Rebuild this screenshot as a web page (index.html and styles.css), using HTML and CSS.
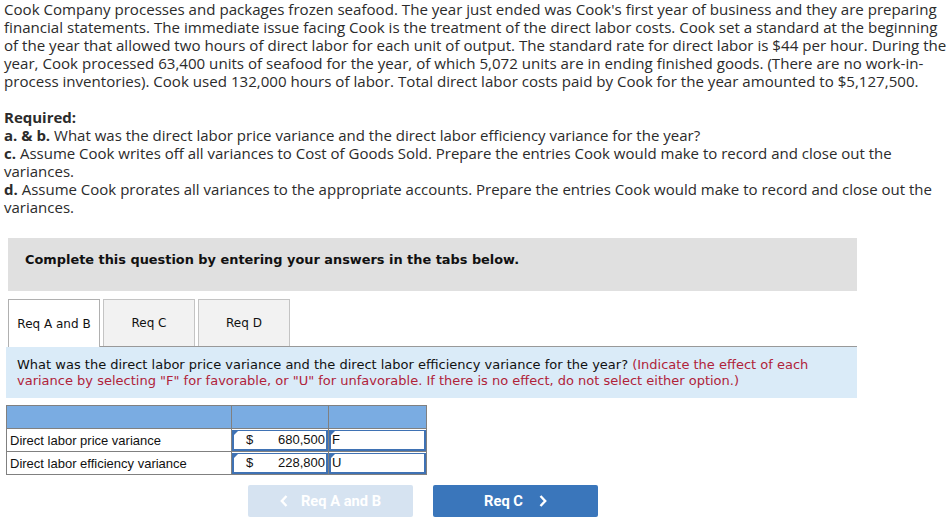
FILE: index.html
```html
<!DOCTYPE html>
<html>
<head>
<meta charset="utf-8">
<link rel="stylesheet" href="styles.css">
</head>
<body>
<div class="page">
  <p class="intro">Cook Company processes and packages frozen seafood. The year just ended was Cook's first year of business and they are preparing<br>financial statements. The immediate issue facing Cook is the treatment of the direct labor costs. Cook set a standard at the beginning<br>of the year that allowed two hours of direct labor for each unit of output. The standard rate for direct labor is $44 per hour. During the<br>year, Cook processed 63,400 units of seafood for the year, of which 5,072 units are in ending finished goods. (There are no work-in-<br>process inventories). Cook used 132,000 hours of labor. Total direct labor costs paid by Cook for the year amounted to $5,127,500.</p>

  <div class="required">
    <div class="req-title">Required:</div>
    <div><b>a. &amp; b.</b> What was the direct labor price variance and the direct labor efficiency variance for the year?</div>
    <div><b>c.</b> Assume Cook writes off all variances to Cost of Goods Sold. Prepare the entries Cook would make to record and close out the<br>variances.</div>
    <div><b>d.</b> Assume Cook prorates all variances to the appropriate accounts. Prepare the entries Cook would make to record and close out the<br>variances.</div>
  </div>

  <div class="complete">Complete this question by entering your answers in the tabs below.</div>

  <div class="tabs">
    <div class="tab active">Req A and B</div>
    <div class="tab">Req C</div>
    <div class="tab">Req D</div>
  </div>

  <div class="prompt">What was the direct labor price variance and the direct labor efficiency variance for the year? <span class="hint">(Indicate the effect of each variance by selecting "F" for favorable, or "U" for unfavorable. If there is no effect, do not select either option.)</span></div>

  <table class="grid">
    <tr class="head"><td class="c1"></td><td class="c2"></td><td class="c3"></td></tr>
    <tr>
      <td class="c1 label">Direct labor price variance</td>
      <td class="c2 input"><div class="box"><span class="cur">$</span><span class="num">680,500</span></div></td>
      <td class="c3 input"><div class="box">F</div></td>
    </tr>
    <tr>
      <td class="c1 label">Direct labor efficiency variance</td>
      <td class="c2 input"><div class="box"><span class="cur">$</span><span class="num">228,800</span></div></td>
      <td class="c3 input"><div class="box">U</div></td>
    </tr>
  </table>

  <div class="nav">
    <div class="btn prev"><svg class="chev" width="8" height="12" viewBox="0 0 8 12"><polyline points="6.5,1 1.8,6 6.5,11" fill="none" stroke="#fff" stroke-width="2.4"/></svg><span>Req A and B</span></div>
    <div class="btn next"><span>Req C</span><svg class="chev" width="8" height="12" viewBox="0 0 8 12"><polyline points="1.5,1 6.2,6 1.5,11" fill="none" stroke="#fff" stroke-width="2.4"/></svg></div>
  </div>
</div>
</body>
</html>
```

FILE: styles.css
```css
html, body {
  margin: 0;
  padding: 0;
  background: #fff;
}
.page {
  padding: 0 4px 0 4px;
  font-family: "Open Sans", "Noto Sans", sans-serif;
  color: #2b2b2b;
}
.intro {
  margin: 0;
  font-size: 15.1px;
  line-height: 18px;
  white-space: nowrap;
}
.required {
  margin-top: 18px;
  font-size: 15px;
  line-height: 18px;
  white-space: nowrap;
}
.req-title {
  font-weight: bold;
}
.required b {
  font-weight: bold;
}
.complete {
  margin: 22px 0 0 4px;
  width: 849px;
  height: 53px;
  box-sizing: border-box;
  background: #e0e0e0;
  padding: 14px 0 0 17px;
  font-family: "DejaVu Sans", Verdana, sans-serif;
  font-weight: bold;
  font-size: 12.9px;
  color: #111;
}
.tabs {
  display: flex;
  gap: 3px;
  margin: 8px 0 0 4px;
  width: 849px;
  border-bottom: 1px solid #999;
  font-family: "DejaVu Sans", Verdana, sans-serif;
  font-size: 12px;
  color: #111;
}
.tab {
  width: 92px;
  height: 47px;
  box-sizing: border-box;
  border: 1px solid #c4c4c4;
  border-bottom: none;
  background: #f2f2f2;
  display: flex;
  align-items: center;
  justify-content: center;
}
.tab.active {
  background: #fff;
  border-color: #b0b0b0;
  margin-bottom: -1px;
  height: 48px;
}
.prompt {
  margin-left: 2px;
  width: 851px;
  box-sizing: border-box;
  background: #daebf8;
  padding: 10px 11px 9px 11px;
  font-family: "DejaVu Sans", Verdana, sans-serif;
  font-size: 13px;
  line-height: 16px;
  color: #111;
}
.hint {
  color: #b0233a;
}
.grid {
  margin: 7px 0 0 2px;
  border-collapse: collapse;
  font-family: "Liberation Sans", Arial, sans-serif;
  font-size: 13px;
  color: #111;
}
.grid td {
  border: 1px solid #808080;
  padding: 0;
  height: 22px;
}
.grid .head td {
  background: #7aace2;
}
.c1 { width: 221px; }
.c2 { width: 96px; }
.c3 { width: 97px; }
.label {
  padding-left: 3px !important;
}
.box {
  position: relative;
  height: 21px;
  border: 2px solid #3f72b4;
  border-top-width: 1px;
  box-sizing: border-box;
  display: flex;
  align-items: center;
  padding: 0 1px;
}
.box::before {
  content: "";
  position: absolute;
  left: -1px;
  top: -1px;
  border-top: 6px solid #3f72b4;
  border-right: 6px solid transparent;
}
.cur {
  margin-left: 11px;
}
.num {
  margin-left: auto;
}
.nav {
  display: flex;
  gap: 20px;
  margin: 10px 0 0 244px;
}
.btn {
  width: 165px;
  height: 32px;
  border-radius: 2px;
  display: flex;
  align-items: center;
  justify-content: center;
  gap: 13px;
  font-family: Roboto, "Liberation Sans", sans-serif;
  font-weight: bold;
  font-size: 14.7px;
  color: #fff;
}
.next {
  gap: 16px;
}
.prev {
  background: #d6e3f1;
}
.next {
  background: #3a76bb;
}
```
